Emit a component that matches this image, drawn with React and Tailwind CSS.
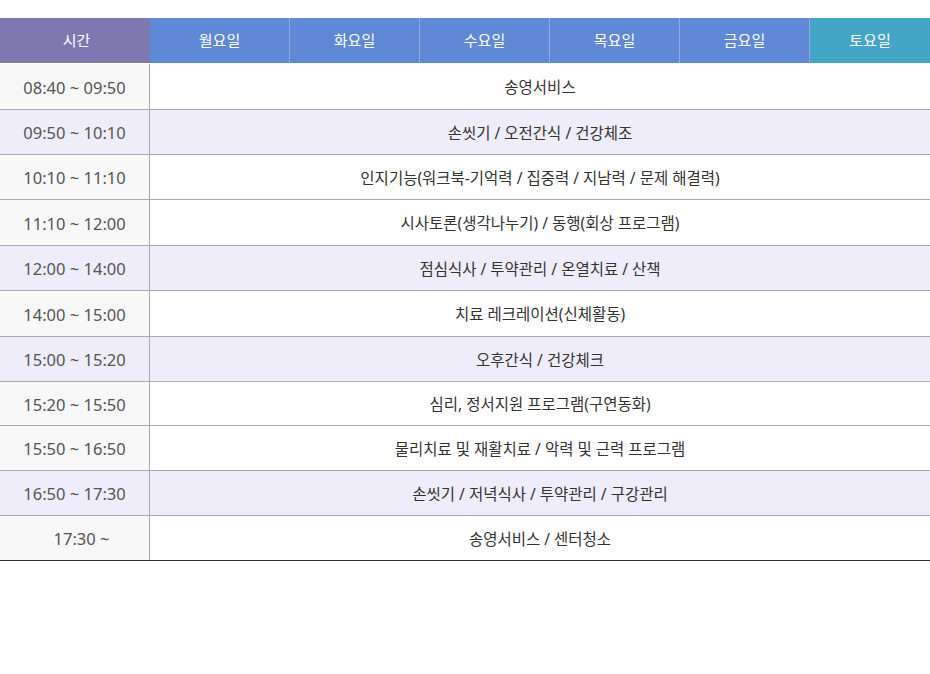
import React from "react";

const rows = [
  ["08:40 ~ 09:50", "송영서비스", false, 46],
  ["09:50 ~ 10:10", "손씻기 / 오전간식 / 건강체조", true, 45],
  ["10:10 ~ 11:10", "인지기능(워크북-기억력 / 집중력 / 지남력 / 문제 해결력)", false, 45],
  ["11:10 ~ 12:00", "시사토론(생각나누기) / 동행(회상 프로그램)", false, 46],
  ["12:00 ~ 14:00", "점심식사 / 투약관리 / 온열치료 / 산책", true, 45],
  ["14:00 ~ 15:00", "치료 레크레이션(신체활동)", false, 46],
  ["15:00 ~ 15:20", "오후간식 / 건강체크", true, 45],
  ["15:20 ~ 15:50", "심리, 정서지원 프로그램(구연동화)", false, 44],
  ["15:50 ~ 16:50", "물리치료 및 재활치료 / 악력 및 근력 프로그램", false, 45],
  ["16:50 ~ 17:30", "손씻기 / 저녁식사 / 투약관리 / 구강관리", true, 45],
  ["17:30 ~", "송영서비스 / 센터청소", false, 45],
];

const days = ["월요일", "화요일", "수요일", "목요일", "금요일"];

export default function App() {
  return (
    <div
      className="w-[930px] h-[674px] bg-white pt-[18px] text-[15px]"
      style={{ fontFamily: '"Noto Sans", "Noto Sans CJK KR", sans-serif' }}
    >
      <div className="flex h-[45px] text-white">
        <div className="w-[150px] bg-[#7e78b0] flex items-center justify-center pl-[3px]">시간</div>
        {days.map((d, i) => (
          <div
            key={d}
            className={`${i === 0 ? "w-[140px]" : "w-[130px]"} bg-[#5f88d7] flex items-center justify-center border-r border-[#8eaae4]`}
          >
            {d}
          </div>
        ))}
        <div className="flex-1 bg-[#43a6c8] flex items-center justify-center">토요일</div>
      </div>
      {rows.map(([t, a, lav, h], i) => {
        const last = i === rows.length - 1;
        return (
          <div
            key={i}
            style={{ height: h + (last ? 1 : 0) }}
            className={`flex border-t ${i === 0 ? "border-transparent" : "border-[#aaaaaa]"} ${last ? "border-b border-b-[#333333]" : ""} ${lav ? "bg-[#efedf9]" : "bg-white"}`}
          >
            <div
              className={`w-[150px] border-r border-[#aaaaaa] flex items-center justify-center pt-[3px] text-[16.5px] text-[#555] ${last ? "pl-[14px]" : ""} ${lav ? "" : "bg-[#f8f8f8]"}`}
            >
              {t}
            </div>
            <div className="flex-1 flex items-center justify-center pt-[3px] text-[15.5px] text-[#333]">{a}</div>
          </div>
        );
      })}
    </div>
  );
}
